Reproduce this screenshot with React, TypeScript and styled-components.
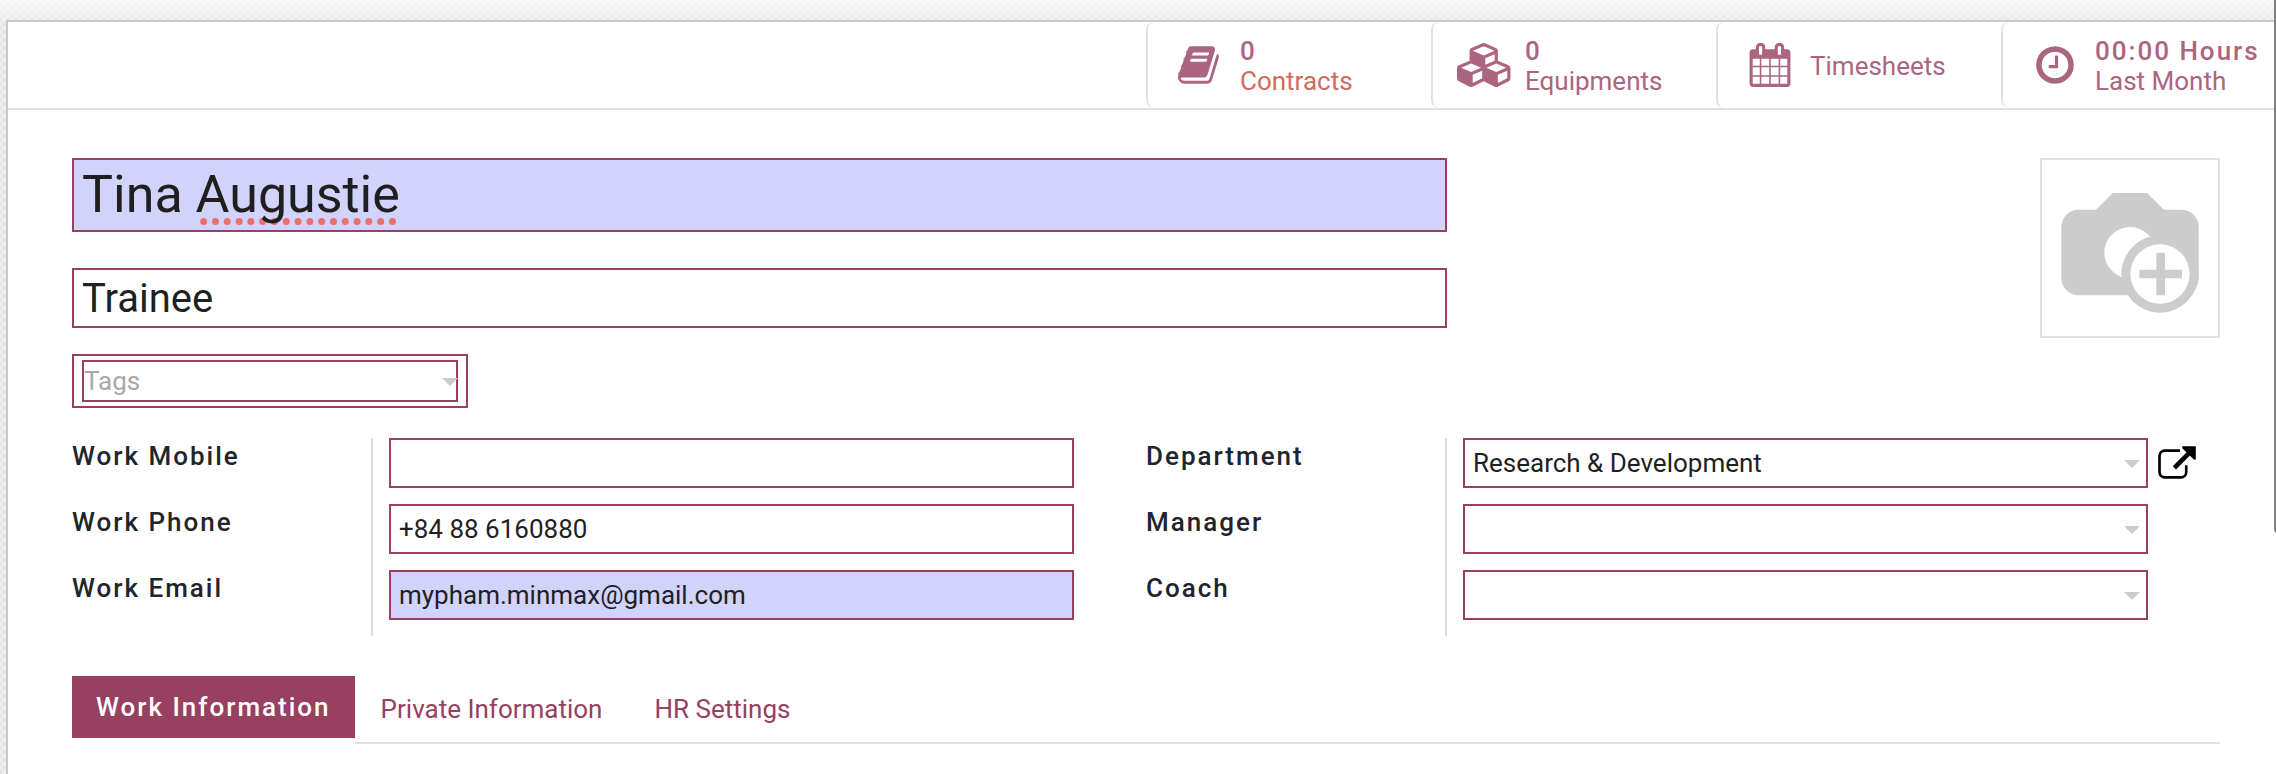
import React from "react";
import styled, { createGlobalStyle } from "styled-components";

const maroon = "#97405f";
const softMaroon = "#ab6580";
const line = "#dee2e6";
const required = "#d2d3fa";

const GlobalStyle = createGlobalStyle`
  *, *::before, *::after { box-sizing: border-box; }
  body { margin: 0; background: #fff; }
  body, button, input, select {
    font-family: Roboto, "Liberation Sans", sans-serif;
    font-size: 26px;
    line-height: 30px;
    color: #1f1f1f;
  }
`;

const Page = styled.div`
  display: flex;
  min-height: 100vh;
  overflow: hidden;
  padding: 20px 0 0 6px;
  background:
    linear-gradient(rgba(255, 255, 255, 0.7), rgba(255, 255, 255, 0) 24px),
    radial-gradient(circle at center, #f6f6f6, rgba(246, 246, 246, 0) 4px) 0 0 / 8px 8px,
    radial-gradient(circle at center, #f6f6f6, rgba(246, 246, 246, 0) 4px) 4px 4px / 8px 8px,
    #dedede;
`;

const Sheet = styled.main`
  flex: 1;
  margin-right: -12px;
  background: #fff;
  border: 2px solid #c8c8d3;
  border-bottom: 0;
`;

const StatBar = styled.div`
  display: flex;
  justify-content: flex-end;
  height: 88px;
  border-bottom: 2px solid ${line};
`;

const StatButton = styled.button`
  display: flex;
  align-items: center;
  width: 285px;
  padding: 0 0 0 12px;
  text-align: left;
  white-space: nowrap;
  color: ${softMaroon};
  background: #fff;
  border: 0;
  border-left: 2px solid ${line};
  border-radius: 8px;
`;

const StatIcon = styled.span`
  display: flex;
  flex: 0 0 80px;
  justify-content: center;

  svg {
    height: 44px;
    fill: currentColor;
  }
`;

const StatText = styled.span`
  display: flex;
  flex-direction: column;
  padding-top: 2px;
`;

const StatValue = styled.span`
  font-weight: 500;
  letter-spacing: 2px;
`;

const StatLabel = styled.span<{ $alert?: boolean }>`
  color: ${(p) => (p.$alert ? "#d06b62" : "inherit")};
`;

const Body = styled.form`
  padding: 48px 66px 30px 64px;
`;

const Header = styled.header`
  display: flex;
  justify-content: space-between;
  align-items: flex-start;
`;

const Titles = styled.div`
  display: flex;
  flex-direction: column;
  width: 64%;
`;

const NameBox = styled.div`
  position: relative;
  height: 74px;
  margin-bottom: 36px;
  background: ${required};
  border: 2px solid ${maroon};
`;

const SpellingMark = styled.svg`
  position: absolute;
  left: 126px;
  bottom: 5px;
  fill: #e9706f;
`;

const NameInput = styled.input`
  position: relative;
  display: block;
  width: 100%;
  height: 68px;
  padding: 0 8px;
  font-size: 52px;
  line-height: 60px;
  background: transparent;
  border: 0;
  outline: 0;
`;

const TextInput = styled.input<{ $required?: boolean; $large?: boolean }>`
  display: block;
  width: 100%;
  height: ${(p) => (p.$large ? 60 : 50)}px;
  padding: 0 8px;
  font-size: ${(p) => (p.$large ? 40 : 26)}px;
  background: ${(p) => (p.$required ? required : "#fff")};
  border: 2px solid ${maroon};
  border-radius: 0;
  outline: 0;
`;

const TagsBox = styled.div`
  width: 396px;
  margin: 26px 0 30px;
  padding: 4px 8px;
  border: 2px solid ${maroon};
`;

const SelectWrap = styled.div`
  position: relative;
`;

const Select = styled.select<{ $tags?: boolean }>`
  display: block;
  appearance: none;
  width: 100%;
  height: ${(p) => (p.$tags ? 42 : 50)}px;
  padding: 0 ${(p) => (p.$tags ? 0 : 8)}px;
  color: ${(p) => (p.$tags ? "#a8a8a8" : "#1f1f1f")};
  background: #fff;
  border: 2px solid ${maroon};
  border-radius: 0;
  outline: 0;
`;

const Caret = styled.span<{ $inset: number }>`
  position: absolute;
  top: 50%;
  right: ${(p) => p.$inset}px;
  margin-top: -3px;
  border: 8px solid transparent;
  border-top-color: #ccc;
  border-bottom: 0;
  pointer-events: none;
`;

const Avatar = styled.button`
  display: block;
  width: 180px;
  height: 180px;
  padding: 0;
  background: #fff;
  border: 2px solid ${line};

  svg {
    display: block;
    fill: #ccc;
  }
`;

const Groups = styled.div`
  display: grid;
  grid-template-columns: 1fr 1fr;
`;

const Group = styled.div`
  display: flex;
  flex-direction: column;
`;

const Row = styled.div`
  display: grid;
  grid-template-columns: 299px 1fr 72px;
  height: 66px;
`;

const Label = styled.label`
  padding-top: 3px;
  font-weight: 500;
  letter-spacing: 2px;
  color: #212529;
`;

const Cell = styled.div`
  padding-left: 16px;
  border-left: 2px solid #ddd;
`;

const OpenButton = styled.button`
  align-self: start;
  width: 38px;
  height: 48px;
  margin-left: 10px;
  padding: 0;
  background: none;
  border: 0;

  svg {
    display: block;
  }
`;

const Tabs = styled.nav`
  display: flex;
  align-items: flex-start;
  margin-top: 40px;
`;

const ActiveTab = styled.button`
  height: 62px;
  padding: 0 24px;
  font-weight: 500;
  letter-spacing: 2px;
  color: #fff;
  background: ${maroon};
  border: 0;
`;

const TabRest = styled.div`
  display: flex;
  flex: 1;
  height: 68px;
  border-bottom: 2px solid ${line};
`;

const Tab = styled.button`
  padding: 0 26px;
  color: ${maroon};
  background: none;
  border: 0;
`;

const ScrollThumb = styled.div`
  position: fixed;
  top: -8px;
  right: -8px;
  width: 10px;
  height: 70vh;
  background: #7f7f7f;
  border-radius: 5px;
`;

const BookIcon = () => (
  <svg viewBox="0 0 1792 1792" aria-hidden="true">
    <path d="M1639 478q40 57 18 129l-275 906q-19 64-76.500 107.500t-122.500 43.500h-923q-77 0-148.500-53.500t-99.500-131.500q-24-67-2-127 0-4 3-27t4-37q1-8-3-21.500t-3-19.500q2-11 8-21t16.500-23.500 16.500-23.500q23-38 45-91.500t30-91.500q3-10 .5-30t-.5-28q3-11 17-28t17-23q21-36 42-92t25-90q1-9-2.500-32t.5-28q4-13 22-30.500t22-22.500q19-26 42.500-84.500t27.500-96.500q1-8-3-25.500t-2-26.500q2-8 9-18t18-23 17-21q8-12 16.500-30.500t15-35 16-36 19.500-32 26.500-23.500 36-11.500 47.500 5.500l-1 3q38-9 51-9h761q74 0 114 56t18 130l-274 906q-36 119-71.500 153.500t-128.500 34.500h-869q-27 0-38 15-11 16-1 43 24 70 144 70h923q29 0 56-15.500t35-41.500l300-987q7-22 5-57 38 15 59 43zm-1064 2q-4 13 2 22.500t20 9.500h608q13 0 25.500-9.500t16.500-22.500l21-64q4-13-2-22.500t-20-9.500h-608q-13 0-25.500 9.500t-16.500 22.500zm-83 256q-4 13 2 22.500t20 9.500h608q13 0 25.500-9.500t16.500-22.500l21-64q4-13-2-22.500t-20-9.500h-608q-13 0-25.500 9.500t-16.500 22.500z" />
  </svg>
);

const CubesIcon = () => (
  <svg viewBox="0 0 2304 1792" aria-hidden="true">
    <path d="M640 1632l384-192v-314l-384 164v342zm-64-454l404-173-404-173-404 173zm1088 454l384-192v-314l-384 164v342zm-64-454l404-173-404-173-404 173zm-448-293l384-165v-266l-384 164v267zm-64-379l441-189-441-189-441 189zm1088 518v416q0 36-19 67t-52 47l-448 224q-25 14-57 14t-57-14l-448-224q-4-2-7-4-2 2-7 4l-448 224q-25 14-57 14t-57-14l-448-224q-33-16-52-47t-19-67v-416q0-38 21.500-70t56.500-48l434-186v-400q0-38 21.500-70t56.500-48l448-192q23-10 50-10t50 10l448 192q35 16 56.500 48t21.500 70v400l434 186q36 16 57 48t21 70z" />
  </svg>
);

const CalendarIcon = () => (
  <svg viewBox="0 0 1792 1792" aria-hidden="true">
    <path d="M192 1664h288v-288h-288v288zm352 0h320v-288h-320v288zm-352-352h288v-320h-288v320zm352 0h320v-320h-320v320zm-352-384h288v-288h-288v288zm736 736h320v-288h-320v288zm-384-736h320v-288h-320v288zm768 736h288v-288h-288v288zm-384-352h320v-320h-320v320zm-352-864v-288q0-13-9.500-22.500t-22.500-9.500h-64q-13 0-22.500 9.500t-9.500 22.500v288q0 13 9.500 22.500t22.500 9.500h64q13 0 22.500-9.500t9.500-22.500zm736 864h288v-320h-288v320zm-384-384h320v-288h-320v288zm384 0h288v-288h-288v288zm32-480v-288q0-13-9.500-22.500t-22.500-9.500h-64q-13 0-22.500 9.500t-9.500 22.500v288q0 13 9.500 22.500t22.500 9.500h64q13 0 22.500-9.500t9.500-22.500zm384-64v1280q0 52-38 90t-90 38h-1408q-52 0-90-38t-38-90v-1280q0-52 38-90t90-38h128v-96q0-66 47-113t113-47h64q66 0 113 47t47 113v96h384v-96q0-66 47-113t113-47h64q66 0 113 47t47 113v96h128q52 0 90 38t38 90z" />
  </svg>
);

const ClockIcon = () => (
  <svg viewBox="0 0 1792 1792" aria-hidden="true">
    <path d="M1024 544v448q0 14-9 23t-23 9h-320q-14 0-23-9t-9-23v-64q0-14 9-23t23-9h224v-352q0-14 9-23t23-9h64q14 0 23 9t9 23zm416 352q0-148-73-273t-198-198-273-73-273 73-198 198-73 273 73 273 198 198 273 73 273-73 198-198 73-273zm224 0q0 209-103 385.500t-279.500 279.500-385.500 103-385.500-103-279.500-279.500-103-385.500 103-385.500 279.500-279.500 385.500-103 385.500 103 279.500 279.500 103 385.500z" />
  </svg>
);

const CameraIcon = () => (
  <svg viewBox="6 6 528 528" width="176" height="176" aria-hidden="true">
    <path d="M116 155h52l51-50h102l51 50h52a52 52 0 0 1 52 52v153a52 52 0 0 1-52 52H116a52 52 0 0 1-52-52V207a52 52 0 0 1 52-52z" />
    <circle cx="270" cy="284" r="77" fill="#fff" />
    <circle cx="360" cy="348" r="116" />
    <circle cx="360" cy="348" r="89" fill="#fff" />
    <path d="M349 284h26v51h51v26h-51v51h-26v-51h-51v-26h51z" />
  </svg>
);

const OpenIcon = () => (
  <svg viewBox="0 0 114 100" width="38" height="33" aria-hidden="true">
    <path d="M66 14H20A16 16 0 0 0 4 30V79A16 16 0 0 0 20 95H69A16 16 0 0 0 85 79V58" fill="none" stroke="#000" strokeWidth="8" />
    <path d="M49 66L95 20" stroke="#000" strokeWidth="14" />
    <path d="M73 1H114V41H108L73 7z" />
  </svg>
);

interface StatProps {
  icon: React.ReactNode;
  value?: string;
  label: string;
  alert?: boolean;
}

const Stat = ({ icon, value, label, alert }: StatProps) => (
  <StatButton type="button">
    <StatIcon>{icon}</StatIcon>
    <StatText>
      {value && <StatValue>{value}</StatValue>}
      <StatLabel $alert={alert}>{label}</StatLabel>
    </StatText>
  </StatButton>
);

interface FieldProps {
  id: string;
  label: string;
  value?: string;
  required?: boolean;
}

const TextField = ({ id, label, value = "", required }: FieldProps) => (
  <Row>
    <Label htmlFor={id}>{label}</Label>
    <Cell>
      <TextInput id={id} defaultValue={value} $required={required} spellCheck={false} />
    </Cell>
  </Row>
);

const SelectField = ({ id, label, value = "" }: FieldProps) => (
  <Row>
    <Label htmlFor={id}>{label}</Label>
    <Cell>
      <SelectWrap>
        <Select id={id} defaultValue={value}>
          <option value={value}>{value}</option>
        </Select>
        <Caret $inset={8} />
      </SelectWrap>
    </Cell>
    {value && (
      <OpenButton type="button" aria-label={`Open ${label}`}>
        <OpenIcon />
      </OpenButton>
    )}
  </Row>
);

export default function App() {
  return (
    <>
      <GlobalStyle />
      <Page>
        <Sheet>
          <StatBar>
            <Stat icon={<BookIcon />} value="0" label="Contracts" alert />
            <Stat icon={<CubesIcon />} value="0" label="Equipments" />
            <Stat icon={<CalendarIcon />} label="Timesheets" />
            <Stat icon={<ClockIcon />} value="00:00 Hours" label="Last Month" />
          </StatBar>
          <Body>
            <Header>
              <Titles>
                <NameBox>
                  <SpellingMark width="197" height="7" viewBox="0 0 591 21" aria-hidden="true">
                    {Array.from({ length: 17 }, (_, i) => (
                      <circle key={i} cx={11 + i * 35.4} cy="10.5" r="10.5" />
                    ))}
                  </SpellingMark>
                  <NameInput aria-label="Employee name" defaultValue="Tina Augustie" spellCheck={false} />
                </NameBox>
                <TextInput $large aria-label="Job title" defaultValue="Trainee" spellCheck={false} />
                <TagsBox>
                  <SelectWrap>
                    <Select $tags aria-label="Tags" defaultValue="">
                      <option value="">Tags</option>
                    </Select>
                    <Caret $inset={0} />
                  </SelectWrap>
                </TagsBox>
              </Titles>
              <Avatar type="button" aria-label="Upload photo">
                <CameraIcon />
              </Avatar>
            </Header>
            <Groups>
              <Group>
                <TextField id="mobile" label="Work Mobile" />
                <TextField id="phone" label="Work Phone" value="+84 88 6160880" />
                <TextField id="email" label="Work Email" value="mypham.minmax@gmail.com" required />
              </Group>
              <Group>
                <SelectField id="department" label="Department" value="Research &amp; Development" />
                <SelectField id="manager" label="Manager" />
                <SelectField id="coach" label="Coach" />
              </Group>
            </Groups>
            <Tabs>
              <ActiveTab type="button">Work Information</ActiveTab>
              <TabRest>
                <Tab type="button">Private Information</Tab>
                <Tab type="button">HR Settings</Tab>
              </TabRest>
            </Tabs>
          </Body>
        </Sheet>
        <ScrollThumb />
      </Page>
    </>
  );
}
